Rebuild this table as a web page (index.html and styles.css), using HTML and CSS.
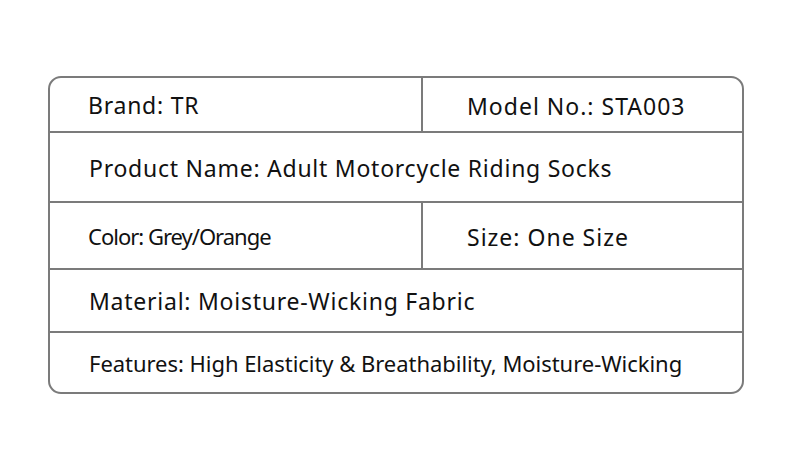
FILE: index.html
```html
<!DOCTYPE html>
<html>
<head>
<meta charset="utf-8">
<link rel="stylesheet" href="styles.css">
</head>
<body>
<div class="page">
  <div class="spec">
    <div class="row r1">
      <div class="cell c-left">Brand: TR</div>
      <div class="cell c-right">Model No.: STA003</div>
    </div>
    <div class="row r2">
      <div class="cell full">Product Name: Adult Motorcycle Riding Socks</div>
    </div>
    <div class="row r3">
      <div class="cell c-left narrow">Color: Grey/Orange</div>
      <div class="cell c-right">Size: One Size</div>
    </div>
    <div class="row r4">
      <div class="cell full">Material: Moisture-Wicking Fabric</div>
    </div>
    <div class="row r5">
      <div class="cell full compact">Features: High Elasticity &amp; Breathability, Moisture-Wicking</div>
    </div>
  </div>
</div>
</body>
</html>
```
FILE: styles.css
```css
html, body {
  margin: 0;
  padding: 0;
  background: #ffffff;
}
.page {
  width: 790px;
  height: 467px;
  padding: 76px 0 0 48px;
  box-sizing: border-box;
}
.spec {
  width: 696px;
  box-sizing: border-box;
  border: 2px solid #7b7b7b;
  border-radius: 13px;
  overflow: hidden;
  font-family: "Noto Sans", "Open Sans", sans-serif;
  font-size: 23px;
  letter-spacing: 0.75px;
  color: #111111;
}
.row {
  display: flex;
  border-bottom: 2px solid #7b7b7b;
}
.row:last-child {
  border-bottom: none;
}
.r1 { height: 53px; }
.r2 { height: 68px; }
.r3 { height: 65px; }
.r4 { height: 61px; }
.r5 { height: 59px; }
.cell {
  display: flex;
  align-items: center;
  box-sizing: border-box;
}
.c-left {
  width: 373px;
  padding-left: 38px;
  border-right: 2px solid #7b7b7b;
}
.c-right {
  flex: 1;
  padding-left: 44px;
  padding-top: 3px;
  letter-spacing: 1px;
}
.full {
  flex: 1;
  padding-left: 39px;
  padding-top: 1px;
}
.narrow {
  font-size: 22px;
  letter-spacing: -1px;
}
.compact {
  font-size: 22px;
  letter-spacing: -0.04px;
}
```
